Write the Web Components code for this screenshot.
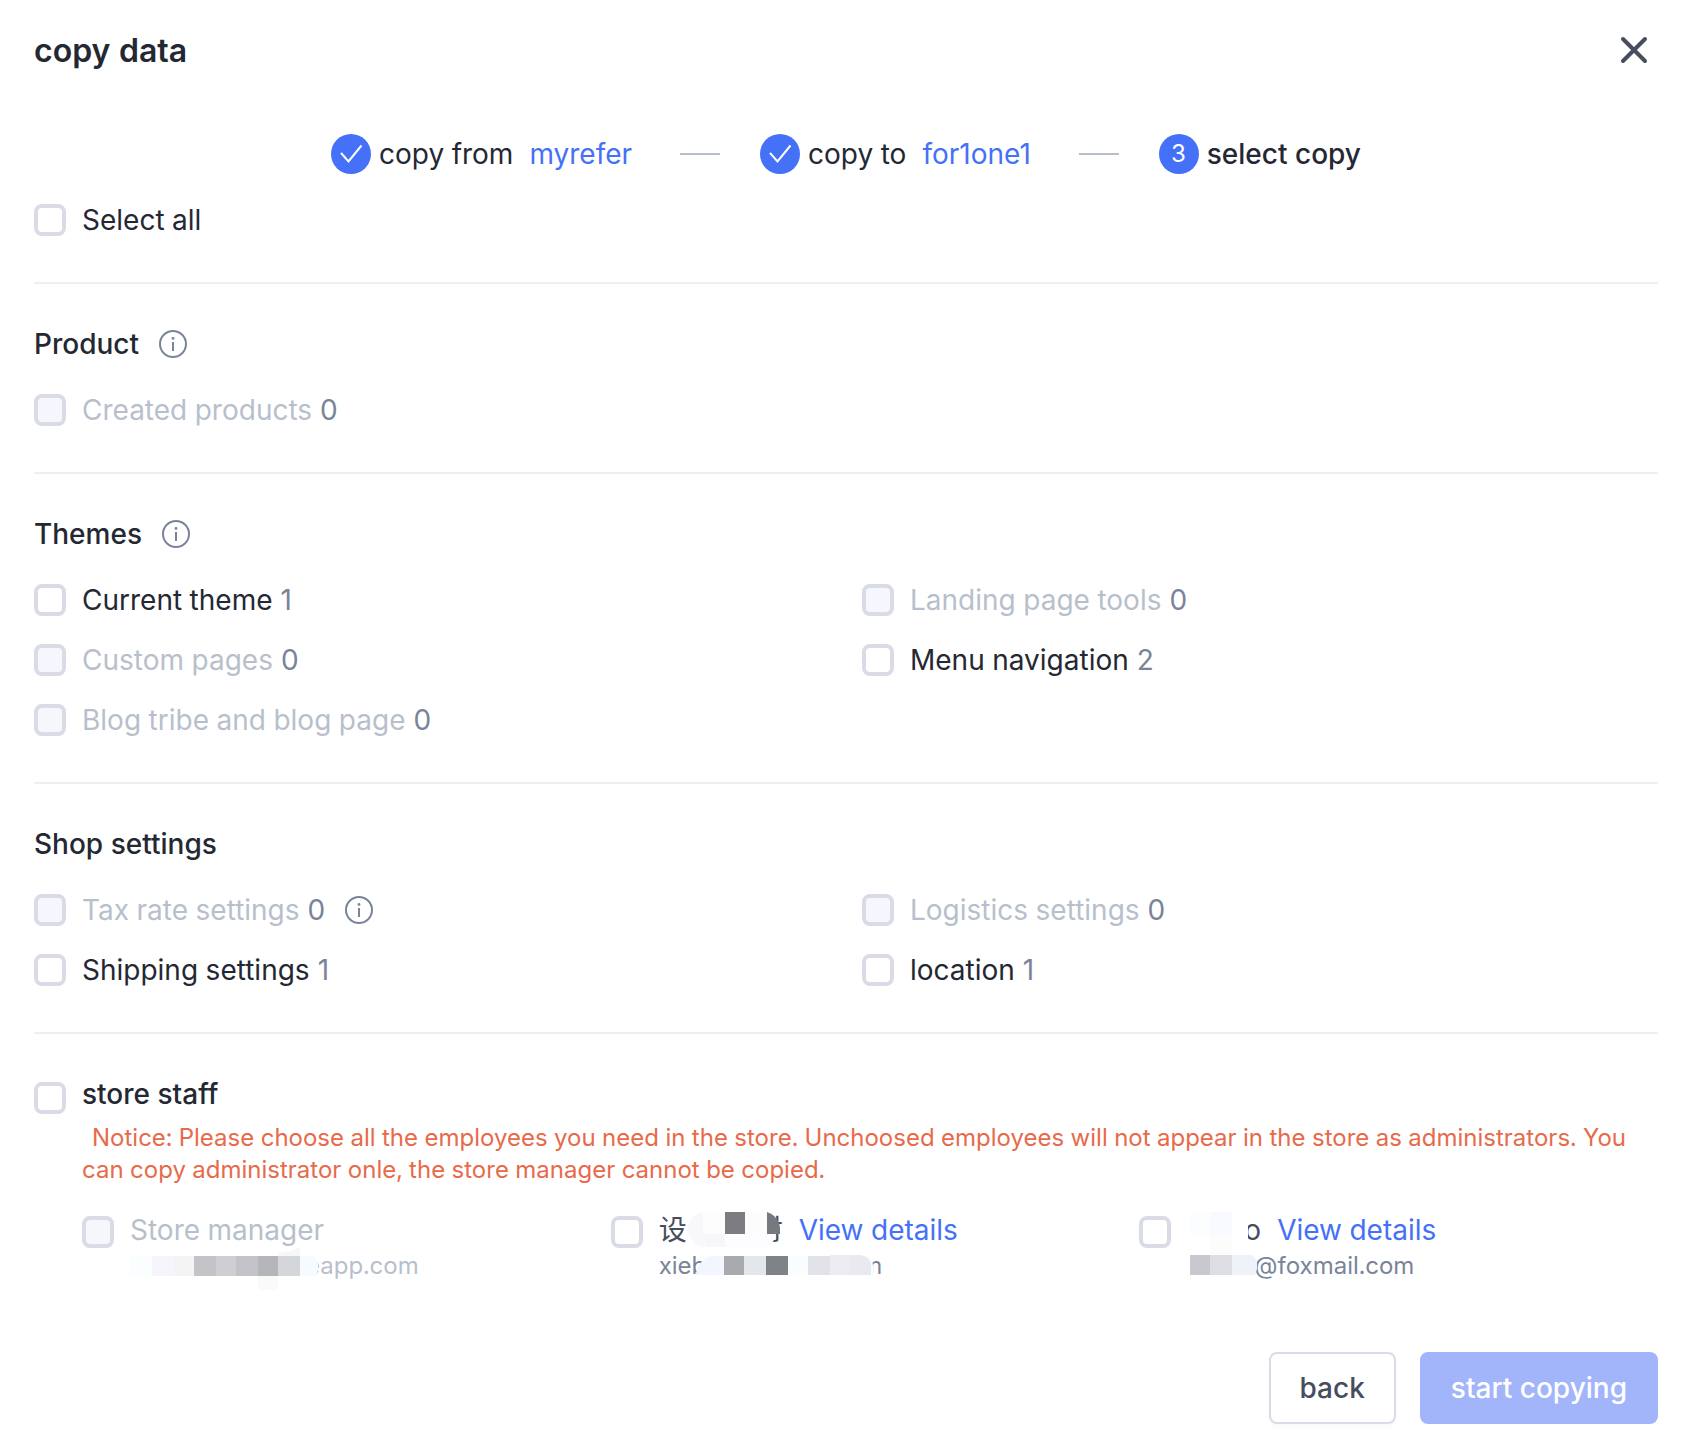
<!DOCTYPE html>
<html lang="en">
<head>
<meta charset="utf-8">
<meta name="viewport" content="width=device-width, initial-scale=1">
<title>copy data</title>
<style>
  body {
    margin: 0;
    background: #fff;
    color: #242833;
    font-family: Inter, "Noto Sans CJK SC", sans-serif;
    font-size: 28px;
    font-variant-numeric: tabular-nums;
    line-height: 40px;
  }
</style>
</head>
<body>
<copy-dialog>
  <span slot="title">copy data</span>

  <copy-step slot="steps" done>copy from <a slot="shop" href="#myrefer">myrefer</a></copy-step>
  <copy-step slot="steps" done>copy to <a slot="shop" href="#for1one1">for1one1</a></copy-step>
  <copy-step slot="steps" number="3">select copy</copy-step>

  <form-section>
    <check-item>Select all</check-item>
  </form-section>

  <form-section heading="Product" info>
    <check-item count="0" disabled>Created products</check-item>
  </form-section>

  <form-section heading="Themes" info>
    <check-item count="1">Current theme</check-item>
    <check-item count="0" disabled>Landing page tools</check-item>
    <check-item count="0" disabled>Custom pages</check-item>
    <check-item count="2">Menu navigation</check-item>
    <check-item count="0" disabled>Blog tribe and blog page</check-item>
  </form-section>

  <form-section heading="Shop settings">
    <check-item count="0" disabled info>Tax rate settings</check-item>
    <check-item count="0" disabled>Logistics settings</check-item>
    <check-item count="1">Shipping settings</check-item>
    <check-item count="1">location</check-item>
  </form-section>

  <staff-section heading="store staff">
    <span slot="notice">Notice: Please choose all the employees you need in the store. Unchoosed employees will not appear in the store as administrators. You can copy administrator onle, the store manager cannot be copied.</span>
    <staff-item disabled>
      <span slot="name">Store manager</span>
      <mask-blocks slot="email" kind="manager"></mask-blocks>
      <span slot="email">eapp.com</span>
    </staff-item>
    <staff-item details>
      <span slot="name">设</span>
      <mask-blocks slot="name" kind="designer"></mask-blocks>
      <span slot="name">时</span>
      <span slot="email">xieb</span>
      <mask-blocks slot="email" kind="designer-mail"></mask-blocks>
      <span slot="email">m</span>
    </staff-item>
    <staff-item details>
      <mask-blocks slot="name" kind="foxmail"></mask-blocks>
      <span slot="name">o</span>
      <mask-blocks slot="email" kind="foxmail-mail"></mask-blocks>
      <span slot="email">@foxmail.com</span>
    </staff-item>
  </staff-section>

  <action-button slot="actions">back</action-button>
  <action-button slot="actions" primary disabled>start copying</action-button>
</copy-dialog>

<script>
  const CHECKBOX_CSS = `
    input {
      appearance: none;
      box-sizing: border-box;
      flex: none;
      width: 32px;
      height: 32px;
      margin: 0;
      border: 4px solid #d9dbe7;
      border-radius: 8px;
      background: #fff;
    }
    input:checked { background: #4571f8; border-color: #4571f8; }
    input:disabled { background: #f6f7fc; }
  `;

  class InfoIcon extends HTMLElement {
    constructor() {
      super();
      this.attachShadow({ mode: 'open' }).innerHTML = `
        <style>
          :host { display: block; flex: none; width: 28px; height: 28px; }
          svg { display: block; }
        </style>
        <svg width="28" height="28" viewBox="0 0 28 28" fill="none" aria-hidden="true">
          <circle cx="14" cy="14" r="13" stroke="#7a8499" stroke-width="2"/>
          <path d="M14 12V21" stroke="#7a8499" stroke-width="2"/>
          <circle cx="14" cy="8.4" r="1.4" fill="#7a8499"/>
        </svg>
      `;
    }
  }

  class CopyStep extends HTMLElement {
    connectedCallback() {
      const done = this.hasAttribute('done');
      const mark = done
        ? `<svg width="40" height="40" viewBox="0 0 40 40" fill="none" aria-hidden="true">
             <path d="M10 19L17.5 27.5L30.5 11.5" stroke="#fff" stroke-width="2"/>
           </svg>`
        : this.getAttribute('number');
      this.attachShadow({ mode: 'open' }).innerHTML = `
        <style>
          :host { display: flex; align-items: center; }
          .mark {
            display: flex;
            align-items: center;
            justify-content: center;
            width: 40px;
            height: 40px;
            margin-right: 8px;
            border-radius: 50%;
            background: #4571f8;
            color: #fff;
            font-size: 24px;
          }
          .label { font-weight: ${done ? 400 : 500}; }
          ::slotted(a) {
            margin-left: 16px;
            color: #4571f8;
            font-variant-numeric: normal;
            text-decoration: none;
          }
          .line { width: 40px; height: 2px; margin: 0 40px 0 48px; background: #b8bfcc; }
        </style>
        <span class="mark">${mark}</span>
        <span class="label"><slot></slot></span>
        <slot name="shop"></slot>
        ${done ? '<span class="line"></span>' : ''}
      `;
    }
  }

  class CheckItem extends HTMLElement {
    connectedCallback() {
      const disabled = this.hasAttribute('disabled');
      const count = this.getAttribute('count');
      this.attachShadow({ mode: 'open' }).innerHTML = `
        <style>
          :host { display: flex; align-items: center; height: 60px; }
          ${CHECKBOX_CSS}
          label { margin-left: 16px; color: ${disabled ? '#b8bfcc' : '#242833'}; }
          .count { margin-left: 8px; color: #7a8499; font-variant-numeric: normal; }
          info-icon { margin-left: 20px; }
        </style>
        <input type="checkbox" id="check" ${disabled ? 'disabled' : ''}>
        <label for="check"><slot></slot></label>
        ${count === null ? '' : `<span class="count">${count}</span>`}
        ${this.hasAttribute('info') ? '<info-icon></info-icon>' : ''}
      `;
    }
  }

  class FormSection extends HTMLElement {
    connectedCallback() {
      const heading = this.getAttribute('heading');
      this.attachShadow({ mode: 'open' }).innerHTML = `
        <style>
          :host { display: block; padding-bottom: 32px; border-bottom: 2px solid #eeeff5; }
          header { display: flex; align-items: center; gap: 20px; padding: 40px 0 16px; }
          h2 { margin: 0; font-size: 28px; font-weight: 500; line-height: 40px; }
          .grid { display: grid; grid-template-columns: 1fr 1fr; column-gap: 32px; }
        </style>
        ${heading ? `<header>
          <h2>${heading}</h2>
          ${this.hasAttribute('info') ? '<info-icon></info-icon>' : ''}
        </header>` : ''}
        <div class="grid"><slot></slot></div>
      `;
    }
  }

  class StaffSection extends HTMLElement {
    connectedCallback() {
      this.attachShadow({ mode: 'open' }).innerHTML = `
        <style>
          :host { display: flex; align-items: flex-start; gap: 16px; padding-top: 40px; }
          ${CHECKBOX_CSS}
          input { margin-top: 8px; }
          .body { flex: 1; min-width: 0; }
          label { display: block; font-weight: 500; }
          p {
            margin: 8px 0 24px;
            color: #e76a4b;
            font-size: 24px;
            line-height: 32px;
            text-indent: 10px;
          }
          .people { display: grid; grid-template-columns: repeat(3, 1fr); column-gap: 10px; }
        </style>
        <input type="checkbox" id="staff">
        <div class="body">
          <label for="staff">${this.getAttribute('heading')}</label>
          <p><slot name="notice"></slot></p>
          <div class="people"><slot></slot></div>
        </div>
      `;
    }
  }

  class StaffItem extends HTMLElement {
    connectedCallback() {
      const disabled = this.hasAttribute('disabled');
      this.attachShadow({ mode: 'open' }).innerHTML = `
        <style>
          :host { display: flex; align-items: flex-start; gap: 16px; }
          ${CHECKBOX_CSS}
          input { margin-top: 6px; }
          .row { display: flex; align-items: center; height: 40px; }
          label { display: flex; align-items: center; color: ${disabled ? '#b8bfcc' : '#474d5c'}; }
          .email {
            height: 32px;
            color: ${disabled ? '#b8bfcc' : '#7a8499'};
            font-size: 24px;
            line-height: 32px;
          }
          a { margin-left: 16px; color: #4571f8; text-decoration: none; }
        </style>
        <input type="checkbox" id="person" ${disabled ? 'disabled' : ''}>
        <div>
          <div class="row">
            <label for="person"><slot name="name"></slot></label>
            ${this.hasAttribute('details') ? '<a href="#details">View details</a>' : ''}
          </div>
          <div class="row email"><slot name="email"></slot></div>
        </div>
      `;
    }
  }

  // mosaic blocks that hide part of a name or an address,
  // margin is how far they reach over the text on each side
  const MASKS = {
    manager: { width: 190, height: 42, margin: '0 -14px 0 0', svg: `
      <path d="M148 8l12-2 10-4v9h-22z" fill="#f7f7f7"/>
      <path d="M128 31h20v14h-20z" fill="#fafafa"/>
      <path d="M0 11h22v20H0z" fill="#fafeff"/>
      <path d="M22 11h22v20H22z" fill="#f6f5fb"/>
      <path d="M44 11h20v20H44z" fill="#f4f4f4"/>
      <path d="M64 11h22v20H64z" fill="#c4c3c8"/>
      <path d="M86 11h20v20H86z" fill="#cfced3"/>
      <path d="M106 11h22v20h-22z" fill="#c4c3c9"/>
      <path d="M128 11h20v20h-20z" fill="#b5b6ba"/>
      <path d="M148 11h22v20h-22z" fill="#d5d6d9"/>
      <path d="M170 11h14l4 8v6l-2 6h-16z" fill="#f5fbff"/>` },
    designer: { width: 96, height: 40, margin: '0 -28px 0 0', svg: `
      <path d="M18 2C8 2 1 10 1 19s7 18 17 18z" fill="#f8f7fc"/>
      <path d="M16 2h22v22H16z" fill="#fdfdfe"/>
      <path d="M16 24h22v13H20z" fill="#f7f7f9"/>
      <path d="M38 2h20v22H38z" fill="#7c7c81"/>
      <path d="M58 2h22v22H58z" fill="#fcfcfd"/>
      <path d="M38 24h50c0 5-2 10-8 13H38z" fill="#fdfdff"/>
      <path d="M80 2c8 3 13 9 13 17v5H80z" fill="#767a7e"/>` },
    'designer-mail': { width: 180, height: 32, margin: '0 -15px 0 -10px', svg: `
      <path d="M18 6C8 6 0 16 0 25h28V6z" fill="#f3f6ff"/>
      <path d="M28 6h20v19H28z" fill="#a9aaae"/>
      <path d="M48 6h22v19H48z" fill="#e3e6ea"/>
      <path d="M70 6h22v19H70z" fill="#7f8387"/>
      <path d="M92 6h20v19H92z" fill="#fafdfe"/>
      <path d="M112 6h22v19h-22z" fill="#e2e3e9"/>
      <path d="M134 5h20v20h-20z" fill="#edecf2"/>
      <path d="M166 6c7 1 11 5 11 10v10h-12z" fill="#fdfdfe"/>
      <path d="M154 5h10c7 1 11 5 11 10v10h-21z" fill="#e9eaef"/>` },
    foxmail: { width: 64, height: 40, margin: '0 -7px 0 0', svg: `
      <path d="M3 2h20v22H3z" fill="#fbfdff"/>
      <path d="M23 2h22v22H23z" fill="#f8faff"/>
      <path d="M23 24h22v22H23z" fill="#fcfcfa"/>
      <path d="M45 2h16v36H45z" fill="#fff"/>` },
    'foxmail-mail': { width: 72, height: 32, margin: '0 -5px 0 0', svg: `
      <path d="M3 5h20v20H3z" fill="#c8c9cf"/>
      <path d="M23 5h22v20H23z" fill="#dddee3"/>
      <path d="M45 5h21l4 6v8l-2 6H45z" fill="#eff3f9"/>` }
  };

  class MaskBlocks extends HTMLElement {
    connectedCallback() {
      const mask = MASKS[this.getAttribute('kind')];
      this.attachShadow({ mode: 'open' }).innerHTML = `
        <style>
          :host { display: block; position: relative; z-index: 1; margin: ${mask.margin}; }
          svg { display: block; overflow: visible; }
        </style>
        <svg width="${mask.width}" height="${mask.height}" aria-hidden="true">${mask.svg}</svg>
      `;
    }
  }

  class ActionButton extends HTMLElement {
    connectedCallback() {
      const primary = this.hasAttribute('primary');
      this.attachShadow({ mode: 'open' }).innerHTML = `
        <style>
          :host { display: block; }
          button {
            box-sizing: border-box;
            height: 72px;
            padding: 0 29px;
            border: 2px solid ${primary ? '#a2b5fb' : '#d9dbe7'};
            border-radius: 8px;
            background: ${primary ? '#a2b5fb' : '#fff'};
            box-shadow: ${primary ? 'none' : '0 4px 4px rgba(0, 0, 0, 0.02)'};
            color: ${primary ? '#fff' : '#474d5c'};
            font: inherit;
            font-weight: 500;
          }
        </style>
        <button type="button" ${this.hasAttribute('disabled') ? 'disabled' : ''}><slot></slot></button>
      `;
    }
  }

  class CopyDialog extends HTMLElement {
    constructor() {
      super();
      this.attachShadow({ mode: 'open' }).innerHTML = `
        <style>
          :host { display: block; padding: 0 36px 24px 34px; }
          header { display: flex; align-items: center; justify-content: space-between; height: 102px; }
          h1 { margin: 0; font-size: 32px; font-weight: 600; line-height: 40px; }
          .close { display: block; padding: 8px; border: 0; background: none; }
          .close svg { display: block; }
          nav { display: flex; justify-content: center; padding: 32px 0 16px; }
          footer { display: flex; justify-content: flex-end; gap: 24px; padding-top: 70px; }
        </style>
        <header>
          <h1><slot name="title"></slot></h1>
          <button class="close" type="button" aria-label="Close">
            <svg width="32" height="32" viewBox="0 0 32 32" fill="none" aria-hidden="true">
              <path d="M5 4L27 26M27 4L5 26" stroke="#474d5c" stroke-width="4" stroke-linecap="round"/>
            </svg>
          </button>
        </header>
        <nav><slot name="steps"></slot></nav>
        <main><slot></slot></main>
        <footer><slot name="actions"></slot></footer>
      `;
    }
  }

  customElements.define('info-icon', InfoIcon);
  customElements.define('copy-step', CopyStep);
  customElements.define('check-item', CheckItem);
  customElements.define('form-section', FormSection);
  customElements.define('staff-section', StaffSection);
  customElements.define('staff-item', StaffItem);
  customElements.define('mask-blocks', MaskBlocks);
  customElements.define('action-button', ActionButton);
  customElements.define('copy-dialog', CopyDialog);
</script>
</body>
</html>
